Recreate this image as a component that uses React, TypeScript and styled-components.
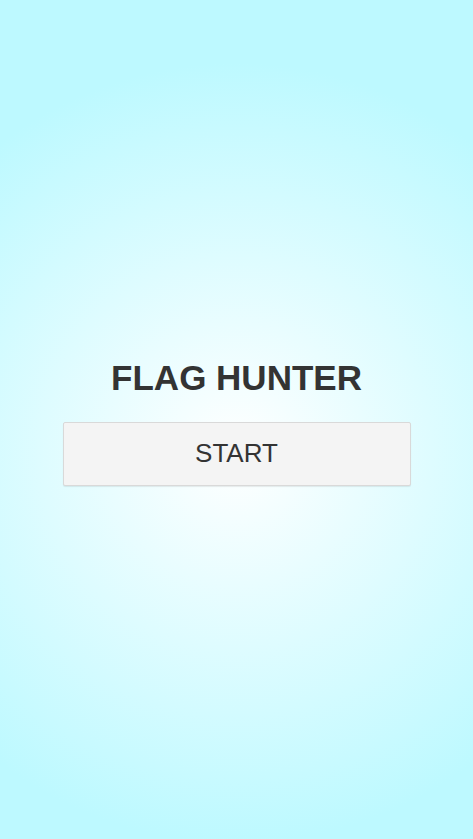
import React from "react";
import styled, { createGlobalStyle } from "styled-components";

const GlobalStyle = createGlobalStyle`
  html, body {
    margin: 0;
    padding: 0;
    height: 100%;
  }
  body {
    font-family: "Liberation Sans", Arial, sans-serif;
    background: #bdf9ff;
  }
`;

const Screen = styled.main`
  box-sizing: border-box;
  min-height: 100vh;
  padding-top: 4px;
  display: flex;
  flex-direction: column;
  align-items: center;
  justify-content: center;
  background: radial-gradient(circle 390px at 50% 54%, #ffffff 0%, #bdf9ff 100%);
`;

const Title = styled.h1`
  margin: 0 0 24px;
  font-family: "Liberation Sans", Arial, sans-serif;
  font-size: 35px;
  font-weight: bold;
  line-height: 40px;
  color: #333333;
  text-align: center;
`;

const StartButton = styled.button`
  box-sizing: border-box;
  width: 348px;
  height: 64px;
  padding: 0;
  border: 1px solid #d9d9d9;
  border-radius: 2px;
  background: #f4f4f4;
  box-shadow: 0 1px 1px rgba(0, 0, 0, 0.08);
  font-family: "Liberation Sans", Arial, sans-serif;
  font-size: 26px;
  color: #333333;
  cursor: pointer;
`;

export default function App() {
  return (
    <>
      <GlobalStyle />
      <Screen>
        <Title>FLAG HUNTER</Title>
        <StartButton>START</StartButton>
      </Screen>
    </>
  );
}
